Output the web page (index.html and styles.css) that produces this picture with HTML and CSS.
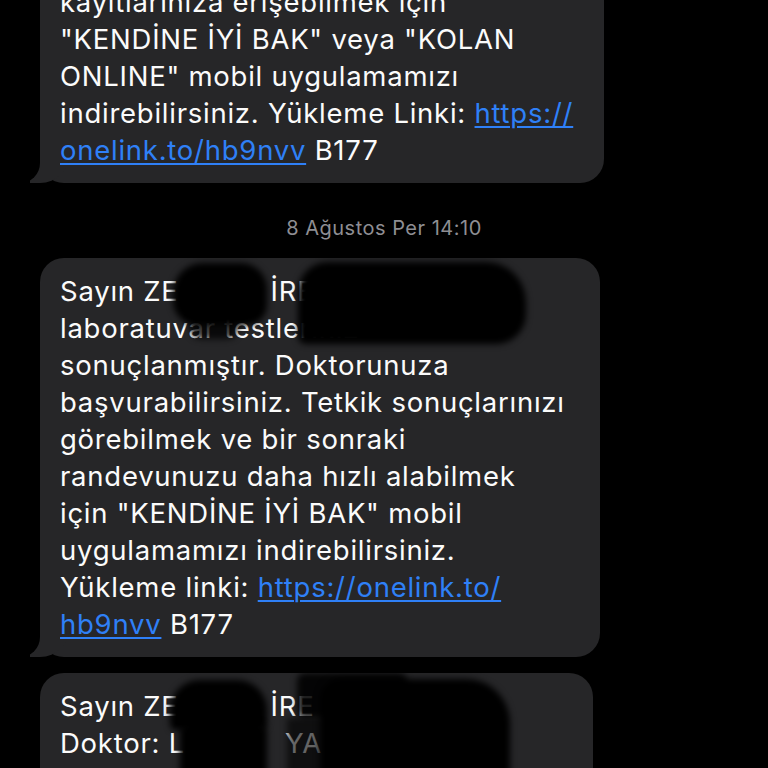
FILE: index.html
```html
<!DOCTYPE html>
<html lang="tr">
<head>
<meta charset="utf-8">
<title>Mesajlar</title>
<link rel="stylesheet" href="styles.css">
</head>
<body>
<div class="thread">
  <div class="bubble tail b1">
    kayıtlarınıza erişebilmek için<br>
    "KENDİNE İYİ BAK" veya "KOLAN<br>
    ONLINE" mobil uygulamamızı<br>
    indirebilirsiniz. Yükleme Linki: <span class="link">https://</span><br>
    <span class="link">onelink.to/hb9nvv</span> B177
  </div>

  <div class="stamp">8 Ağustos Per 14:10</div>

  <div class="bubble tail b2">
    Sayın ZE<span class="gap g1"></span>İRE<span class="gap g2"></span><br>
    laboratuvar testleriniz<br>
    sonuçlanmıştır. Doktorunuza<br>
    başvurabilirsiniz. Tetkik sonuçlarınızı<br>
    görebilmek ve bir sonraki<br>
    randevunuzu daha hızlı alabilmek<br>
    için "KENDİNE İYİ BAK" mobil<br>
    uygulamamızı indirebilirsiniz.<br>
    Yükleme linki: <span class="link">https://onelink.to/</span><br>
    <span class="link">hb9nvv</span> B177
    <span class="blob b2-a"></span>
    <span class="blob b2-a2"></span>
    <span class="blob b2-b"></span>
  </div>

  <div class="bubble b3">
    Sayın ZE<span class="gap g3"></span>İRE<span class="gap g4"></span>,<br>
    Doktor: L<span class="gap g5"></span>YA<span class="gap g6"></span><br>
    &nbsp;
    <span class="blob b3-c"></span>
    <span class="blob b3-c2"></span>
    <span class="blob b3-d"></span>
    <span class="blob b3-ya"></span>
    <span class="blob b3-e"></span>
  </div>
</div>
</body>
</html>
```

FILE: styles.css
```css
html, body {
  margin: 0;
  padding: 0;
  background: #000;
}

body {
  width: 768px;
  height: 768px;
  overflow: hidden;
  font-family: "Inter", "Liberation Sans", sans-serif;
}

.thread {
  display: flex;
  flex-direction: column;
  align-items: flex-start;
}

.bubble {
  position: relative;
  z-index: 0;
  box-sizing: border-box;
  margin-left: 40px;
  padding: 15px 20px 14px;
  background: #262628;
  border-radius: 24px;
  color: #fbfbfb;
  font-size: 27.5px;
  letter-spacing: 0.75px;
  line-height: 37px;
  white-space: nowrap;
}

.b1 {
  width: 564px;
  margin-top: -31px;
}

.b2 {
  width: 560px;
}

.b3 {
  width: 553px;
  margin-top: 16px;
}

/* iMessage style tail at the bottom-left corner */
.tail::before {
  content: "";
  position: absolute;
  z-index: -1;
  left: -10px;
  bottom: 0;
  width: 40px;
  height: 34px;
  background: #262628;
  border-bottom-right-radius: 30px;
}

.tail::after {
  content: "";
  position: absolute;
  z-index: -1;
  left: -40px;
  bottom: 0;
  width: 40px;
  height: 34px;
  background: #000;
  border-bottom-right-radius: 20px;
}

.stamp {
  align-self: stretch;
  margin: 34px 0 19px;
  text-align: center;
  color: #8e8e93;
  font-size: 20px;
  letter-spacing: 0.5px;
  line-height: 22px;
}

.link {
  color: #2f80f7;
  text-decoration: underline;
  text-decoration-thickness: 1.5px;
  text-underline-offset: 3px;
}

.gap {
  display: inline-block;
}

.g1 { width: 92px; }
.g2 { width: 230px; }
.g3 { width: 92px; }
.g4 { width: 160px; }
.g5 { width: 100px; }
.g6 { width: 180px; }

/* marker redactions drawn over the text */
.blob {
  position: absolute;
  background: #000;
  filter: blur(3px);
}

.b2-a {
  left: 133px;
  top: 5px;
  width: 94px;
  height: 62px;
  border-radius: 30px 26px 20px 24px;
}

.b2-a2 {
  left: 150px;
  top: 55px;
  width: 48px;
  height: 26px;
  border-radius: 10px;
  background: rgba(0, 0, 0, 0.75);
}

.b2-b {
  left: 258px;
  top: 4px;
  width: 228px;
  height: 82px;
  border-radius: 30px 40px 30px 8px;
}

.b3-c {
  left: 130px;
  top: 7px;
  width: 97px;
  height: 50px;
  border-radius: 30px 30px 6px 6px;
}

.b3-c2 {
  left: 140px;
  top: 50px;
  width: 87px;
  height: 70px;
  border-radius: 10px;
}

.b3-d {
  left: 257px;
  top: 0;
  width: 110px;
  height: 45px;
  border-radius: 8px;
  background: rgba(0, 0, 0, 0.88);
}

.b3-ya {
  left: 247px;
  top: 45px;
  width: 40px;
  height: 60px;
  background: rgba(0, 0, 0, 0.6);
}

.b3-e {
  left: 280px;
  top: 6px;
  width: 190px;
  height: 110px;
  border-radius: 20px 44px 10px 10px;
}
```
